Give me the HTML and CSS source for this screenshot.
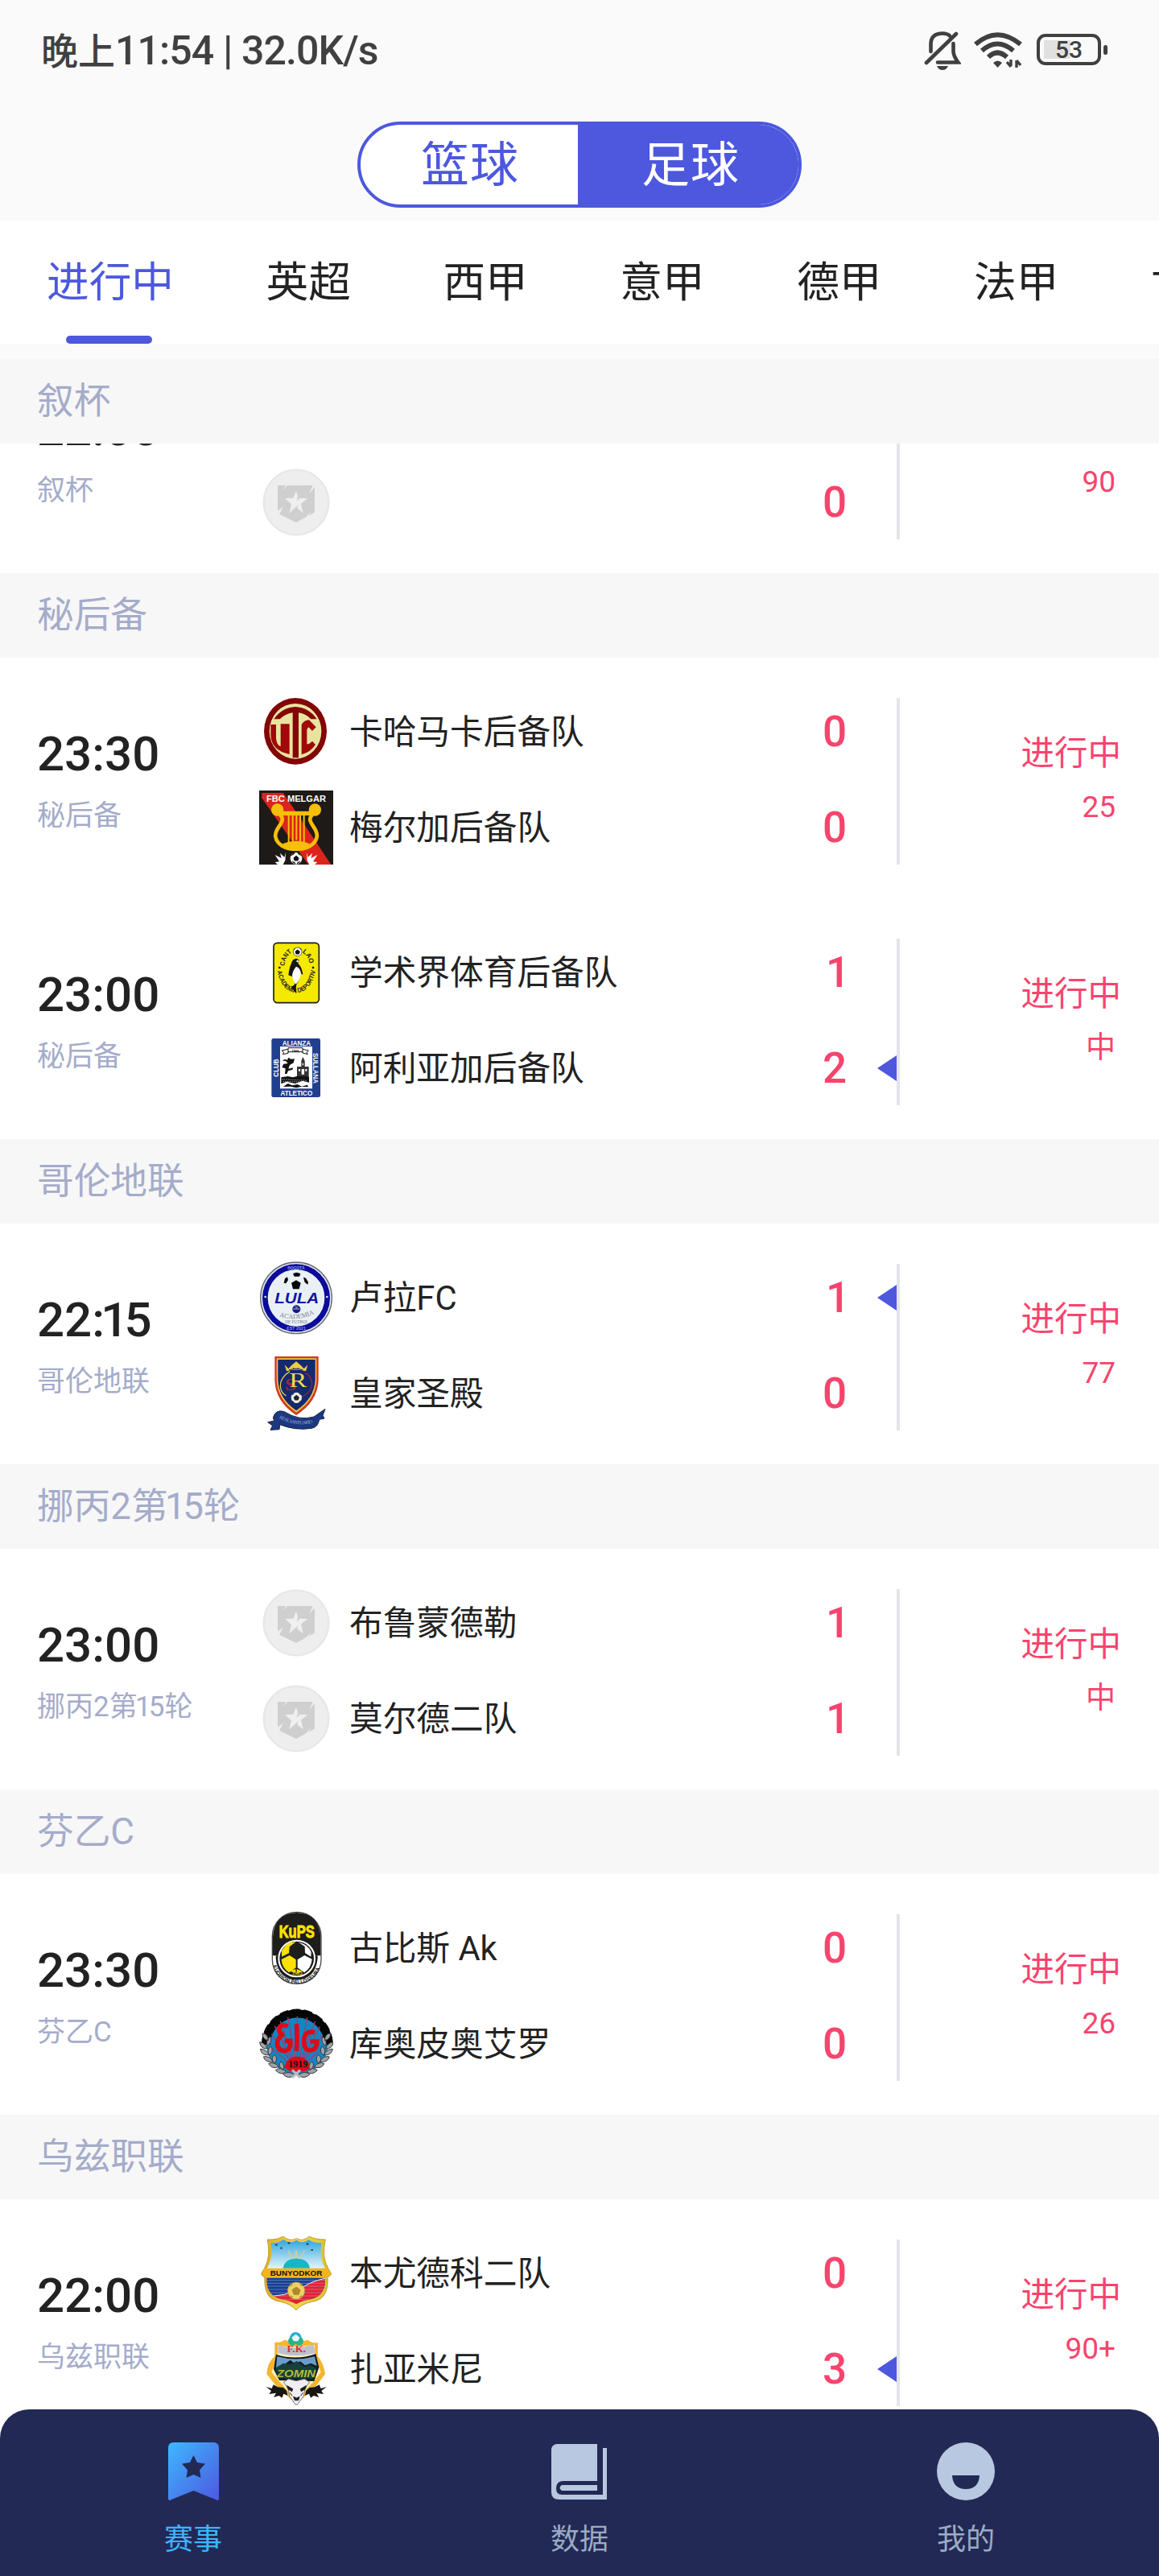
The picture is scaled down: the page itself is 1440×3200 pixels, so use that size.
FILE: index.html
```html
<!DOCTYPE html>
<html lang="zh-CN">
<head>
<meta charset="utf-8">
<title>赛事</title>
<link rel="stylesheet" href="styles.css">
</head>
<body>
<svg class="defs" width="0" height="0" aria-hidden="true">
  <symbol id="blank-crest" viewBox="66 60 276 276">
    <circle cx="204" cy="198" r="121" fill="#eeeeee" stroke="#e7e7e7" stroke-width="7"/>
    <path d="M138 135H166L152 154 172 135H266L252 165 273 142V235L250 248 260 232 240 253 204 273 141 242 156 214 135 230V138Q135 135 138 135Z" fill="#cfcfcf"/>
    <path d="M204 155L210 177 206 194 218 182 247 183 222 203 230 238 207 219 212 206 200 218 178 238 186 205 162 183 193 182Z" fill="#efefef"/>
  </symbol>
</svg>

<header class="top">
  <div class="status">
    <span class="status-text">晚上<span class="num">11:54 | 32.0K/s</span></span>
    <span class="status-icons">
      <svg class="i-bell" width="46" height="50" viewBox="0 0 46 50" fill="none" stroke="#404040" stroke-width="4.6" stroke-linecap="round" stroke-linejoin="round">
        <path d="M8.500 26V16C9 7 15 3.500 23 3.500c4 0 7 1 9 3"/><path d="M40 4L3 40"/>
        <path d="M36.500 16v10c0 4 2 8 6 13.500H17" stroke-linejoin="miter"/>
        <path d="M16 44h14q-2 5-7 5t-7-5z" fill="#404040" stroke="none"/>
      </svg>
      <svg class="i-wifi" width="60" height="46" viewBox="0 0 60 46" fill="none" stroke="#404040" stroke-width="6">
        <path d="M2 15Q29-8.500 58 15"/><path d="M10 23Q29 6 49 23"/><path d="M18 31q11-11 23 0"/>
        <path d="M24 38q5.500-5 11 0l-5.500 6z" fill="#404040" stroke="none"/>
        <path d="M46 34v8m0 1l-5-6M53 44v-9m0 0l5 6" stroke-width="3.400"/>
      </svg>
      <span class="battery"><span class="battery-body">53</span><span class="battery-tip"></span></span>
    </span>
  </div>
  <div class="switch"><span class="seg">篮球</span><span class="seg seg-on">足球</span></div>
</header>

<nav class="tabs">
  <span class="tab tab-on">进行中</span><span class="tab">英超</span><span class="tab">西甲</span><span class="tab">意甲</span><span class="tab">德甲</span><span class="tab">法甲</span><span class="tab">世界杯</span>
</nav>

<main class="feed">
  <h2 class="league">叙杯</h2>
  <div class="scrolled">
    <article class="match">
      <div class="when"><b class="time">22:00</b><span class="cup">叙杯</span></div>
      <div class="teams">
        <div class="team"><svg class="logo"><use href="#blank-crest"/></svg><span class="name"></span><b class="score"></b><i class="slot"></i></div>
        <div class="team"><svg class="logo"><use href="#blank-crest"/></svg><span class="name"></span><b class="score">0</b><i class="slot"></i></div>
      </div>
      <div class="rule"></div>
      <div class="state"><span class="live">进行中</span><span class="minute">90</span></div>
    </article>
  </div>

  <h2 class="league">秘后备</h2>
  <article class="match">
    <div class="when"><b class="time">23:30</b><span class="cup">秘后备</span></div>
    <div class="teams">
      <div class="team">
        <svg class="logo" viewBox="66 39 276 276">
          <ellipse cx="201" cy="175" rx="117" ry="124" fill="#820507"/>
          <ellipse cx="201" cy="175" rx="97" ry="103" fill="#e8e4a0"/>
          <path d="M121 130q30-44 80-46 50 2 80 46h-22q-18-20-46-24v168h-22V106q-28 4-48 24z" fill="#850608"/>
          <path d="M109 150h20v52q2 24 17 30V148h33v113q-68-14-70-72z" fill="#a0080a"/>
          <path d="M224 262V150q10-16 28-17l26 27-14 14-14-14q-6 4-6 12v50q6 4 20-10l12 13q-18 28-52 37z" fill="#a0080a"/>
        </svg>
        <span class="name">卡哈马卡后备队</span><b class="score">0</b><i class="slot"></i></div>
      <div class="team">
        <svg class="logo" viewBox="66 396 276 276">
          <path d="M66 396h276v276H66z" fill="#1d1a17"/><path d="M76 405h80l178 267h-85L76 424z" fill="#dc241c"/>
          <circle cx="134" cy="468" r="23" fill="#f7bf0a"/><circle cx="274" cy="468" r="23" fill="#f7bf0a"/>
          <path d="M140 473h128v16H140z" fill="#f7bf0a"/>
          <path d="M144 486c28 28-24 48-17 83 5 27 35 46 77 46s72-19 77-46c7-35-45-55-17-83" fill="none" stroke="#f7bf0a" stroke-width="14"/>
          <path d="M154 594q50-20 100 0l-25 24h-55z" fill="#f7bf0a"/>
          <path d="M176 487v108m15-108v98m14-98v93m14-93v98m14-98v108" stroke="#f7bf0a" stroke-width="6"/>
          <text x="204" y="437" text-anchor="middle" textLength="222" lengthAdjust="spacingAndGlyphs" class="crest-text" font-size="35" fill="#fff">FBC MELGAR</text>
          <circle cx="204" cy="649" r="22" fill="#fff"/><path d="M204 640l9 7-3 10h-12l-3-10zM185 638l10-5 3-7M223 638l-10-5-3-7M189 662l8 1 4 7M219 662l-8 1-4 7" fill="#111" stroke="#111" stroke-width="3"/>
          <path d="M125 636l24 12-5-19 16 16 5-18-2 30-8 15h-20l-10-9 16-2zM283 636l-24 12 5-19-16 16-5-18 2 30 8 15h20l10-9-16-2z" fill="#fff"/>
        </svg>
        <span class="name">梅尔加后备队</span><b class="score">0</b><i class="slot"></i></div>
    </div>
    <div class="rule"></div>
    <div class="state"><span class="live">进行中</span><span class="minute">25</span></div>
  </article>
  <article class="match">
    <div class="when"><b class="time">23:00</b><span class="cup">秘后备</span></div>
    <div class="teams">
      <div class="team">
        <svg class="logo" viewBox="66 36 276 276">
          <rect x="120" y="64" width="169" height="223" rx="14" fill="#f4e900" stroke="#1d1d1b" stroke-width="5"/>
          <path id="arc-top" d="M161 150A46 55 0 0 1 254 150" fill="none"/><path id="arc-bottom" d="M134 169A72 101 0 0 0 275 169" fill="none"/>
          <text class="crest-text" font-size="25" fill="#1d1d1b"><textPath href="#arc-top" textLength="60" lengthAdjust="spacingAndGlyphs">CANT</textPath></text>
          <text class="crest-text" font-size="25" fill="#1d1d1b"><textPath href="#arc-top" startOffset="100" textLength="52" lengthAdjust="spacingAndGlyphs">LAO</textPath></text>
          <text class="crest-text" font-size="24" fill="#1d1d1b"><textPath href="#arc-bottom" textLength="248" lengthAdjust="spacingAndGlyphs">ACADEMIA DEPORTIVA</textPath></text>
          <circle cx="209" cy="97" r="16" fill="#fff" stroke="#222" stroke-width="2"/><path d="M209 90l8 6-3 9h-10l-3-9zM195 91l5-8M223 91l-5-8" fill="#111" stroke="#111" stroke-width="3"/>
          <circle cx="142" cy="156" r="4"/><circle cx="267" cy="156" r="4"/>
          <path d="M186 140Q190 122 206 122L215 128 211 140Q226 155 229 182L221 178Q214 208 204 222L203 252 194 240 184 226Q196 226 200 214L190 190 175 184Q178 156 186 140Z" fill="#151515"/>
          <path d="M204 152Q221 158 222 180 216 206 203 218 190 205 189 185 192 165 204 152Z" fill="#fff"/><circle cx="209" cy="132" r="4" fill="#fff"/>
        </svg>
        <span class="name">学术界体育后备队</span><b class="score"><span class="one">1</span></b><i class="slot"></i></div>
      <div class="team">
        <svg class="logo" viewBox="66 393 276 276">
          <rect x="112" y="420" width="182" height="219" rx="7" fill="#213f8f"/><path d="M144 450h120v157H144z" fill="#fff"/>
          <g class="crest-text" font-size="28" fill="#fff">
            <text x="205" y="446" text-anchor="middle" textLength="106" lengthAdjust="spacingAndGlyphs">ALIANZA</text>
            <text x="205" y="634" text-anchor="middle" textLength="119" lengthAdjust="spacingAndGlyphs">ATLETICO</text>
            <text transform="translate(138 563) rotate(-90)" textLength="67" lengthAdjust="spacingAndGlyphs">CLUB</text>
            <text transform="translate(268 474) rotate(90)" textLength="114" lengthAdjust="spacingAndGlyphs">SULLANA</text>
          </g>
          <path d="M150 465l24-5v-5h54v5l22 5-7 7 4 7-19-5v-4h-54v5l-20 4 4-7zM174 460v12M228 460v12" fill="#fff" stroke="#111" stroke-width="3"/>
          <text x="201" y="471" text-anchor="middle" class="crest-text" font-size="12">1906</text>
          <path d="M153 503q8-9 17-2l6-10 8 6 14-1-4 15-14 8-5 14 18-4-3 7-16 5-5 11h-7l2-20-13-4 6-13 16-2-8-9zM148 565l25-4 19 4 22-6 38 3v22l-24-6-28 10-32-7-20 8zM155 600l18-12 16 7 20-4 16 8 20-6 5 8-28-1-18 4-20-5z" fill="#111"/>
          <path d="M207 525h16v-22l6-14 7 14v22h15v36h-44z" fill="#333"/><path d="M213 534h6v8h-6zm14-22h4v8h-4zm-3 22h10v20h-10zm14 0h6v8h-6z" fill="#fff"/>
          <path d="M150 572l95 5M155 580l80 2" stroke="#fff" stroke-width="2" stroke-dasharray="4 4"/>
        </svg>
        <span class="name">阿利亚加后备队</span><b class="score">2</b><i class="slot lead"></i></div>
    </div>
    <div class="rule"></div>
    <div class="state"><span class="live">进行中</span><span class="minute">中</span></div>
  </article>

  <h2 class="league">哥伦地联</h2>
  <article class="match">
    <div class="when"><b class="time">22:<span class="one">1</span>5</b><span class="cup">哥伦地联</span></div>
    <div class="teams">
      <div class="team">
        <svg class="logo" viewBox="66 48 276 276">
          <circle cx="204" cy="187" r="133" fill="#e2e5ea" stroke="#666975" stroke-width="4"/><circle cx="204" cy="187" r="116" fill="#e9f1f6" stroke="#0b0b9c" stroke-width="20"/>
          <path d="M192 97q13-10 28 0l-4 10h-19zM186 131l18-10 17 10-6 23h-23zM158 131l4-16 9-6 3 11-8 13zM231 110l9 3 9 15-2 9-11-8z" fill="#050505"/>
          <text x="206" y="206" text-anchor="middle" textLength="165" lengthAdjust="spacingAndGlyphs" class="crest-text" font-size="54" font-style="italic" fill="#1212a8">LULA</text>
          <circle cx="205" cy="229" r="15" fill="#171781"/><path d="M193 228h24M200 218l5 6 5-6" stroke="#b8c4e8" stroke-width="3" fill="none"/>
          <path id="aca" d="M141 256Q205 278 276 244" fill="none"/><text font-family="Liberation Serif" font-size="25" fill="#7c828b"><textPath href="#aca" textLength="134" lengthAdjust="spacingAndGlyphs">ACADEMIA</textPath></text>
          <text x="206" y="281" text-anchor="middle" textLength="86" font-family="Liberation Serif" font-size="16" fill="#7c828b">DE FUTBOL</text>
          <g class="crest-text" font-size="15" fill="#8d9bea"><text x="204" y="82" text-anchor="middle" textLength="64">BOGOTÁ</text><text x="204" y="306" text-anchor="middle" textLength="70">EST 2021</text></g>
          <circle cx="89" cy="183" r="4" fill="#dfe5ff"/><circle cx="319" cy="183" r="4" fill="#dfe5ff"/>
        </svg>
        <span class="name">卢拉FC</span><b class="score"><span class="one">1</span></b><i class="slot lead"></i></div>
      <div class="team">
        <svg class="logo" viewBox="66 405 276 276">
          <path d="M124 405h163v88q-3 81-83 131-78-51-80-131z" fill="#cf3a24"/><path d="M131 412h149v81q-4 74-76 121-70-48-73-121z" fill="#ebc348"/><path d="M136 417h139v76q-4 70-71 114-65-45-68-114z" fill="#14296e"/>
          <path d="M161 436l14 15 12-13 17-14 17 14 12 13 14-15-7 24q-37-11-72 0z" fill="#f0cc3e"/><path d="M178 455q26-9 50 0M194 447v5m18-5v5" stroke="#14296e" stroke-width="3" fill="none"/>
          <path d="M180 461c-51 33-38 77-13 91" fill="none" stroke="#dfc85b" stroke-width="4"/><path d="M238 465c42 31 29 78-26 95" fill="none" stroke="#9d2446" stroke-width="4"/>
          <text x="162" y="530" font-family="Liberation Serif" font-weight="700" font-size="66" textLength="42" lengthAdjust="spacingAndGlyphs" fill="#bb193f">S</text><text x="178" y="520" textLength="66" lengthAdjust="spacingAndGlyphs" font-family="Liberation Serif" font-size="78" fill="#f1d84a">R</text>
          <circle cx="205" cy="559" r="20" fill="#ecefe9"/><path d="M205 550l9 7-3 10h-12l-3-10zM189 548l7-5M221 548l-7-5M190 571l5 4M220 571l-5 4" fill="#222" stroke="#222" stroke-width="3"/>
          <path d="M98 650L122 645 118 633Q128 600 160 611 215 646 270 630L312 601 303 625 309 636 290 640Q286 668 262 673 200 682 143 659L141 677 108 679 116 663Z" fill="#1b3981" stroke="#1a2443" stroke-width="3"/>
          <path id="rib" d="M140 635Q205 671 275 650" fill="none"/><text font-size="18" font-family="Liberation Serif" fill="#9aaed8"><textPath href="#rib" textLength="130">REAL SANTUARIO</textPath></text>
        </svg>
        <span class="name">皇家圣殿</span><b class="score">0</b><i class="slot"></i></div>
    </div>
    <div class="rule"></div>
    <div class="state"><span class="live">进行中</span><span class="minute">77</span></div>
  </article>

  <h2 class="league">挪丙2第<span class="one">1</span>5轮</h2>
  <article class="match">
    <div class="when"><b class="time">23:00</b><span class="cup">挪丙2第<span class="one">1</span>5轮</span></div>
    <div class="teams">
      <div class="team"><svg class="logo"><use href="#blank-crest"/></svg><span class="name">布鲁蒙德勒</span><b class="score"><span class="one">1</span></b><i class="slot"></i></div>
      <div class="team"><svg class="logo"><use href="#blank-crest"/></svg><span class="name">莫尔德二队</span><b class="score"><span class="one">1</span></b><i class="slot"></i></div>
    </div>
    <div class="rule"></div>
    <div class="state"><span class="live">进行中</span><span class="minute">中</span></div>
  </article>

  <h2 class="league">芬乙C</h2>
  <article class="match">
    <div class="when"><b class="time">23:30</b><span class="cup">芬乙C</span></div>
    <div class="teams">
      <div class="team">
        <svg class="logo" viewBox="66 42 276 276">
          <rect x="115" y="46" width="182" height="267" rx="90" fill="#fff" stroke="#4a4a48" stroke-width="4"/>
          <path d="M117 208v-72q6-84 89-88 84 4 89 88v72z" fill="#1d1d1b"/><path d="M128 208h156v10q-8 77-78 81-71-4-78-81z" fill="#1d1d1b"/>
          <text x="206" y="142" text-anchor="middle" textLength="132" lengthAdjust="spacingAndGlyphs" class="crest-text" font-size="64" fill="#ffe100" stroke="#ffe100" stroke-width="3">KuPS</text>
          <circle cx="206" cy="219" r="67" fill="#1d1d1b" stroke="#fff" stroke-width="6"/>
          <path d="M150 190l22-29 31-4-24 18-2 24-27 13zM149 222l30-15 24 16v30l-26 18q-27-18-28-49zM180 266l22-8v14zM206 258l21 8-20 9z" fill="#ffe100"/>
          <path d="M212 158q36 7 48 37l-1 17-22-14-1-24zM209 223l26-16 28 14q-3 34-29 50l-25-18z" fill="#fff"/>
          <text x="208" y="280" text-anchor="middle" class="crest-text" font-size="17" fill="#e1c800">1923</text>
          <path id="kups" d="M126 238A80 67 0 0 0 286 238" fill="none"/>
          <text class="crest-text" font-size="20" fill="#111" dy="8"><textPath href="#kups" startOffset="5" textLength="212" lengthAdjust="spacingAndGlyphs">KUOPION PALLOSEURA</textPath></text>
        </svg>
        <span class="name">古比斯 Ak</span><b class="score">0</b><i class="slot"></i></div>
      <div class="team">
        <svg class="logo" viewBox="66 399 276 276">
          <circle cx="208" cy="537" r="115" fill="#1186c4"/>
          <path d="M92 540A116 116 0 0 1 324 540" fill="none" stroke="#060606" stroke-width="31"/><path d="M83 540A125 125 0 0 1 333 540" fill="none" stroke="#060606" stroke-width="17" stroke-dasharray="31 13"/>
          <path d="M208 636L112 500m96 136L124 470m84 166L145 452m63 184L173 438m35 198V434m0 202l37-198m-37 198l67-184m-67 184l84-163m-84 163l95-133M208 636L110 550m98 86l98-86" stroke="#a13b70" stroke-width="4"/>
          <path d="M159 625q12-41 49-41t50 41l-22 15h-53z" fill="#e00917"/>
          <g fill="none" stroke="#e00917" stroke-width="17"><path d="M173 471q-31-13-32 14 2 16 16 17-22 10-24 34 3 28 28 27 23-3 21-37h-21"/><path d="M205 462q4 42 0 102"/><path d="M273 494q-39-9-40 32 0 36 24 35 25-3 24-33h-25"/></g>
          <text x="211" y="624" text-anchor="middle" font-family="Liberation Serif" font-weight="700" font-size="37" textLength="72" lengthAdjust="spacingAndGlyphs" fill="#111">1919</text>
          <g fill="#a1a2a7" stroke="#3a3b40" stroke-width="3"><path id="leaf" d="M78 498q20 0 22 26-22-3-22-26zM68 530q22 3 28 25-27 0-28-25zM70 556q22 0 33 22-28 4-33-22zM82 585q22-6 36 18-28 6-36-18zM101 611q20-10 38 11-23 12-38-11zM127 635q20-15 39 5-18 17-39-5zM155 650q23-15 43 4-23 17-43-4zM108 510q-18 10-12 35 20-13 12-35zM110 546q-18 10-6 34 18-14 6-34zM124 577q-18 13-2 33 16-16 2-33zM147 603q-14 15 7 32 11-18-7-32z"/><use href="#leaf" transform="translate(410 0) scale(-1 1)"/><path d="M189 634l30 29m0-29l-30 29" stroke="#bbb" stroke-width="9"/></g>
        </svg>
        <span class="name">库奥皮奥艾罗</span><b class="score">0</b><i class="slot"></i></div>
    </div>
    <div class="rule"></div>
    <div class="state"><span class="live">进行中</span><span class="minute">26</span></div>
  </article>

  <h2 class="league">乌兹职联</h2>
  <article class="match">
    <div class="when"><b class="time">22:00</b><span class="cup">乌兹职联</span></div>
    <div class="teams">
      <div class="team">
        <svg class="logo" viewBox="66 54 276 276">
          <defs><linearGradient id="gold" x1="0" x2="1"><stop offset="0" stop-color="#dfa520"/><stop offset=".5" stop-color="#f8d54e"/><stop offset="1" stop-color="#d3c133"/></linearGradient><linearGradient id="sky" x1="0" x2="0" y1="0" y2="1"><stop offset="0" stop-color="#1c9dda"/><stop offset="1" stop-color="#e6f6fb"/></linearGradient><clipPath id="bun"><path d="M109 79Q140 80 155 66 180 84 205 68 228 84 250 67 270 80 299 79 288 130 312 175V222Q309 276 260 288 222 294 204 306 186 294 148 288 97 276 94 222V175Q120 130 109 79Z"/></clipPath></defs>
          <path d="M97 66Q135 68 155 54 180 76 205 62 230 76 252 54 275 67 313 66 298 130 323 173L335 195 321 209Q326 290 262 298 223 306 204 329 185 306 146 298 82 290 87 209L73 195 86 173Q110 130 97 66Z" fill="url(#gold)" stroke="#b99e2a" stroke-width="3"/>
          <g clip-path="url(#bun)"><path d="M80 55h250v120H80z" fill="url(#sky)"/><path d="M80 205h250v130H80z" fill="#153e95"/><path d="M80 288q40-15 80-17l70-28q40-27 100-35v130H80z" fill="#e22133" stroke="#fff" stroke-width="3"/><path d="M80 218h250M80 229h250M80 240h250M80 252h250M80 264h250M80 276h250M80 289h250" stroke="#a9b3d2" stroke-width="1.500"/></g>
          <path d="M155 173q6-36 50-36t50 36z" fill="#19b5c4"/><path d="M202 136V110h4v26M174 107l12 29M235 107l-15 29" stroke="#d8c994" stroke-width="5"/>
          <path d="M86 173h235l12 22-14 14H91l-14-14z" fill="#f0b622"/>
          <text x="204" y="201" text-anchor="middle" textLength="194" lengthAdjust="spacingAndGlyphs" class="crest-text" font-size="26" fill="#130d02">BUNYODKOR</text>
          <circle cx="204" cy="257" r="32" fill="#eed266" stroke="#a78d2b" stroke-width="2"/><path d="M204 244l14 10-5 16h-17l-6-16zM181 240l10-8M227 240l-9-8M183 275l8 6M225 275l-8 6" fill="#ad892c" stroke="#ad892c" stroke-width="4"/>
          <path d="M126 86h8m11 12h7m21-19h8m61 4h8m9 22h8" stroke="#15303d" stroke-width="5"/>
        </svg>
        <span class="name">本尤德科二队</span><b class="score">0</b><i class="slot"></i></div>
      <div class="team">
        <svg class="logo" viewBox="66 411 276 276">
          <path d="M124 449Q145 452 160 440 205 454 248 440 265 455 285 450L284 500Q306 525 312 568L278 612 212 672H196L130 612 94 568Q96 525 124 500Z" fill="#f3b62e"/><path d="M136 460Q176 470 273 459L275 505 296 560 270 595 212 655H196L140 595 112 560 134 505Z" fill="#fff3bb"/>
          <circle cx="202" cy="433" r="22" fill="#29aeda"/><circle cx="190" cy="445" r="16" fill="#2ab388"/><circle cx="215" cy="445" r="16" fill="#29b58a"/><path d="M187 431l16-12 14 12-6 14h-16z" fill="#eef4fb"/>
          <path d="M138 460q65 20 131-3l6 33q-70 18-139 0z" fill="#bec1ce"/><text x="205" y="487" text-anchor="middle" font-family="Liberation Serif" font-weight="700" font-size="38" textLength="71" lengthAdjust="spacingAndGlyphs" fill="#e02c34">F.K.</text>
          <path d="M129 494q74 24 148-2l12 50-18 52-130-3-21-42z" fill="#111b22"/><path d="M133 502q70 19 140 0l8 35-22-10-22 8-18-15-17 10-20-15-22 17-23 8-8 5z" fill="#699dc9"/><path d="M126 545l30-18 25 4 26-12 28 22 20-8 25 13-11 38H140z" fill="#173f3b"/>
          <text x="204" y="580" text-anchor="middle" class="crest-text" font-size="37" font-style="italic" textLength="145" lengthAdjust="spacingAndGlyphs" fill="#b6bb2c">ZOMIN</text>
          <path d="M157 598l18-12 29 7 31-7 19 12-17 22-5 30-24 31h-7l-22-31-5-30z" fill="#f1eef2" stroke="#777" stroke-width="3"/><path d="M170 611l21 12-3 9-15-9zM241 611l-21 12 3 9 15-9zM194 652l11 5 11-5-4 13h-13zM181 637l8 12M229 637l-8 12" fill="#211e23" stroke="#211e23" stroke-width="3"/>
          <path d="M92 615l21 6 6-14 16 9 21 2 12 11 4 18-15-6-6 15-11-8-20 6 9-16-26 4 8-12zM317 615l-21 6-6-14-16 9-21 2-12 11-4 18 15-6 6 15 11-8 20 6-9-16 26 4-8-12z" fill="#181713"/>
        </svg>
        <span class="name">扎亚米尼</span><b class="score">3</b><i class="slot lead"></i></div>
    </div>
    <div class="rule"></div>
    <div class="state"><span class="live">进行中</span><span class="minute">90+</span></div>
  </article>
</main>

<nav class="bottom">
  <a class="item item-on">
    <svg width="72" height="72" viewBox="0 0 72 72"><defs><linearGradient id="mark" x1="0" y1="0" x2="1" y2="1"><stop offset="0" stop-color="#3db9ff"/><stop offset="1" stop-color="#4e57df"/></linearGradient></defs><path d="M5 7q0-7 7-7h49q7 0 7 7v62q0 5-4 2L36.500 60 9 71q-4 3-4-2z" fill="url(#mark)"/><path d="M36.500 16l4.500 9 10 1.500-7 8 1.500 9.500-9-4-9 4 1.500-9.500-7-8 10-1.500z" fill="#222955"/></svg>
    <span>赛事</span></a>
  <a class="item">
    <svg width="72" height="72" viewBox="0 0 72 72"><path d="M9 2h49v46H16q-9 0-9 9t9 8h49V7h5v64H11q-10 0-10-9V10q0-8 8-8z" fill="#b9c8e1"/><path d="M14 53h44v7H14q-5-3.500 0-7z" fill="#b9c8e1"/></svg>
    <span>数据</span></a>
  <a class="item">
    <svg width="72" height="72" viewBox="0 0 72 72"><circle cx="36" cy="36" r="36" fill="#b9c8e1"/><path d="M19 41h34q-1 17-17 17T19 41z" fill="#222955"/></svg>
    <span>我的</span></a>
</nav>
</body>
</html>
```
FILE: styles.css
```css
* { box-sizing: border-box; }
body {
  margin: 0;
  width: 1440px;
  height: 3200px;
  overflow: hidden;
  display: flex;
  flex-direction: column;
  background: #fff;
  color: #222;
  font-family: Roboto, "Noto Sans CJK SC", sans-serif;
}
.defs { display: none; }

.top { height: 274px; flex: none; background: #fafafa; display: flex; flex-direction: column; align-items: center; }
.status { width: 100%; height: 151px; padding: 37px 64px 0 51px; display: flex; justify-content: space-between; align-items: flex-start; color: #404040; }
.status-text { padding-top: 1px; font-size: 46px; line-height: 50px; font-weight: 500; white-space: pre; }
.num { font-size: 50px; letter-spacing: -0.9px; }
.status-icons { display: flex; align-items: flex-start; padding-top: 1px; }
.i-wifi { margin: 2px 18px 0 16px; }
.battery { display: flex; align-items: center; gap: 3px; padding-top: 4px; }
.battery-body {
  width: 80px; height: 39px; border: 4px solid #404040; border-radius: 11px;
  background: linear-gradient(#e0e0e0, #e0e0e0) 5px 4px / 33px 23px no-repeat;
  font-size: 30px; line-height: 32px; text-align: center; font-weight: 500;
}
.battery-tip { width: 5px; height: 12px; border-radius: 3px; background: #404040; }

.switch { width: 552px; height: 107px; border: 4px solid #4d58de; border-radius: 54px; background: #fff; display: flex; overflow: hidden; }
.seg { flex: 1; padding-left: 2px; font-size: 60px; line-height: 102px; text-align: center; letter-spacing: 1px; color: #4d58de; }
.seg-on { background: #4d58de; color: #fff; flex: 0 0 274px; padding-left: 6px; }

.tabs { height: 153px; flex: none; padding-left: 58px; display: flex; gap: 114.500px; overflow: hidden; background: #fff; }
.tab { flex: none; display: flex; flex-direction: column; justify-content: space-between; align-items: center; font-size: 52.700px; line-height: 154px; }
.tab-on { color: #4d58de; }
.tab-on::after { content: ""; width: 107px; height: 10px; margin: -11px 3px 0 0; border-radius: 5px; background: #4d58de; flex: none; }

.feed { flex: none; height: 2585px; padding-top: 19px; background: linear-gradient(#fafafa 19px, #fff 19px); overflow: hidden; }
.league { margin: 0; height: 105px; padding-left: 46px; background: #f7f7f7; color: #a5acca; font-size: 45.700px; line-height: 106px; font-weight: 400; }
.scrolled { height: 161px; overflow: hidden; display: flex; flex-direction: column; justify-content: flex-end; }
.match { flex: none; height: 299px; display: grid; grid-template-columns: 274px 792px 4px 1fr; padding: 0 47px 0 48px; }
.when { display: flex; flex-direction: column; padding-top: 85px; white-space: nowrap; margin-left: -2px; }
.time { font-size: 60px; line-height: 70px; font-weight: 500; }
.cup { margin-top: 17px; font-size: 35px; line-height: 50px; color: #a5acca; }
.one { margin: 0 -0.08em; }
.teams { padding-top: 46px; display: flex; flex-direction: column; gap: 27px; }
.team { height: 92px; display: flex; align-items: center; }
.logo { width: 92px; height: 92px; flex: none; }
.name { flex: 1; padding: 2px 0 0 20px; font-size: 41.700px; line-height: 90px; white-space: pre; }
.score { padding-right: 1px; font-size: 53px; line-height: 93px; font-weight: 500; color: #f7446d; }
.slot { width: 61px; height: 32px; flex: none; }
.lead { background: #4d58de; clip-path: polygon(61px 0, 61px 32px, 37px 16px); }
.rule { margin-top: 50px; height: 207px; background: #e4e4e9; }
.state { display: flex; flex-direction: column; align-items: flex-end; padding-top: 94px; color: #f7446d; }
.live { font-size: 41.500px; line-height: 50px; }
.minute { margin-top: 17px; padding-right: 7px; font-size: 37px; line-height: 50px; }
.crest-text { font-family: "Liberation Sans", sans-serif; font-weight: 700; }

.bottom { position: relative; flex: none; height: 207px; margin-top: -19px; display: flex; border-radius: 36px 36px 0 0; background: #222955; }
.item { flex: 1; display: flex; flex-direction: column; align-items: center; padding-top: 41px; color: #9babc2; font-size: 36px; line-height: 50px; }
.item span { margin-top: 24px; }
.item-on { color: #3cb5ff; }
```
